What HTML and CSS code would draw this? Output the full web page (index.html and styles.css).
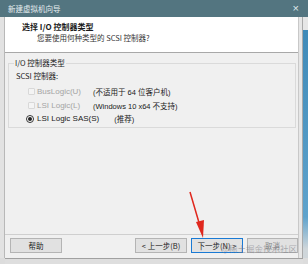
FILE: index.html
```html
<!DOCTYPE html>
<html>
<head>
<meta charset="utf-8">
<link rel="stylesheet" href="styles.css">
</head>
<body>
<div class="screen">
  <div class="titlebar">
    <span class="title">新建虚拟机向导</span>
    <span class="close">×</span>
  </div>
  <div class="frame">
    <div class="frame-left"></div>
    <div class="dialog">
      <div class="header">
        <div class="h-title">选择 I/O 控制器类型</div>
        <div class="h-sub">您要使用何种类型的 SCSI 控制器?</div>
      </div>
      <div class="body">
        <div class="group">
          <div class="group-label">I/O 控制器类型</div>
          <div class="scsi">SCSI 控制器:</div>
          <div class="opt">
            <span class="radio disabled"></span>
            <span class="opt-name disabled">BusLogic(U)</span>
            <span class="opt-note">(不适用于 64 位客户机)</span>
          </div>
          <div class="opt">
            <span class="radio disabled"></span>
            <span class="opt-name disabled">LSI Logic(L)</span>
            <span class="opt-note">(Windows 10 x64 不支持)</span>
          </div>
          <div class="opt">
            <span class="radio checked"></span>
            <span class="opt-name sas">LSI Logic SAS(S)</span>
            <span class="opt-note rec">(推荐)</span>
          </div>
        </div>
      </div>
      <div class="footer">
        <button class="btn help">帮助</button>
        <div class="spacer"></div>
        <button class="btn prev">&lt; 上一步(B)</button>
        <button class="btn next">下一步(N) &gt;</button>
        <button class="btn cancel">取消</button>
        <div class="watermark">@稀土掘金技术社区</div>
        <svg class="arrow" width="30" height="60" viewBox="0 0 30 60">
          <line x1="4" y1="2" x2="14" y2="36" stroke="#e0281e" stroke-width="1.5"/>
          <polygon points="10,32 18,30 17,48" fill="#e0281e"/>
        </svg>
      </div>
    </div>
    <div class="frame-right"></div>
    <div class="bgwin"></div>
  </div>
  <div class="frame-bottom"></div>
</div>
</body>
</html>
```
FILE: styles.css
```css
* { box-sizing: border-box; }
html, body { margin: 0; padding: 0; }
body {
  width: 308px;
  height: 264px;
  overflow: hidden;
  background: #dcdcdc;
  font-family: "Liberation Sans", "Noto Sans CJK SC", sans-serif;
  font-size: 8px;
  color: #1a1a1a;
}
.screen { width: 308px; height: 264px; display: flex; flex-direction: column; }
.titlebar {
  height: 17px;
  background: #537580;
  display: flex;
  align-items: center;
  justify-content: space-between;
  padding: 0 9px 0 8px;
  color: #e6eef0;
  flex: none;
}
.title { font-size: 7.5px; font-family: "Noto Sans CJK SC", sans-serif; }
.close { font-size: 11px; color: #dfe8ea; line-height: 1; }
.frame { display: flex; height: 241px; flex: none; }
.frame-left { width: 5px; background: #e2e2e2; border-right: 1px solid #b8b8b8; flex: none; }
.dialog { width: 293px; display: flex; flex-direction: column; background: #f0f0f0; flex: none; }
.frame-right { width: 5px; background: #e6e6e6; border-left: 1px solid #c8c8c8; border-right: 1px solid #a9a9a9; flex: none; }
.bgwin { flex: 1; background: linear-gradient(#e6e6e6 0, #e6e6e6 13px, #3f8ab8 13px, #5fa3cc 200px, #cfd6da 232px); }
.frame-bottom { flex: 1; background: #dedede; border-top: 1px solid #a0a0a0; margin-left: 5px; width: 298px; }
.header {
  height: 36px;
  background: #ffffff;
  border-bottom: 1px solid #a8a8a8;
  padding: 5px 0 0 17px;
  flex: none;
}
.h-title { font-weight: bold; font-size: 8px; line-height: 10px; font-family: "Noto Sans CJK SC", sans-serif; }
.h-sub { padding-left: 15px; line-height: 11px; font-size: 7.5px; color: #333; font-family: "Noto Sans CJK SC", sans-serif; }
.body { flex: 1; padding: 10px 2px 0 3px; }
.group {
  border: 1px solid #dadada;
  height: 65px;
  position: relative;
  padding: 7px 0 0 7px;
}
.group-label {
  position: absolute;
  top: -7px;
  left: 5px;
  background: #f0f0f0;
  padding: 0 1px;
  line-height: 11px;
  font-family: "Noto Sans CJK SC", sans-serif;
  font-size: 7.5px;
}
.scsi { line-height: 10px; font-size: 7.5px; font-family: "Noto Sans CJK SC", sans-serif; margin-bottom: 4px; }
.opt { display: flex; align-items: center; height: 13.5px; white-space: nowrap; }
.radio {
  width: 8px; height: 8px;
  border-radius: 50%;
  border: 1px solid #333;
  margin-left: 10px;
  margin-right: 3px;
  flex: none;
  position: relative;
  background: #fff;
}
.radio.disabled { border-color: #d8d8d8; border-radius: 1px; background: #f4f4f4; margin-left: 12px; margin-right: 2px; width: 7px; height: 7px; }
.radio.checked::after {
  content: "";
  position: absolute;
  left: 1px; top: 1px;
  width: 4px; height: 4px;
  border-radius: 50%;
  background: #222;
}
.opt-name { width: 56px; font-size: 8px; flex: none; }
.opt-name.sas { width: auto; }
.opt-name.disabled { color: #a4a4a4; }
.opt-note { font-size: 7.5px; font-family: "Liberation Sans", "Noto Sans CJK SC", sans-serif; }
.opt-note.rec { margin-left: 15px; }
.footer {
  height: 24px;
  border-top: 1px solid #cfcfcf;
  display: flex;
  align-items: center;
  padding: 0 0 2px 5px;
  position: relative;
  flex: none;
}
.spacer { flex: 1; }
.btn {
  height: 15px;
  width: 52px;
  background: #e1e1e1;
  border: 1px solid #b4b4b4;
  font-family: "Noto Sans CJK SC", sans-serif;
  font-size: 7.5px;
  padding: 0;
  color: #222;
  margin-right: 4px;
}
.btn.next { border-color: #1a7ad4; }
.btn.cancel { margin-right: 0; width: 51px; color: #888; }
.watermark {
  position: absolute;
  right: 1px;
  top: 7px;
  font-family: "Noto Sans CJK SC", sans-serif;
  font-size: 8.5px;
  color: rgba(120, 120, 130, 0.55);
}
.arrow { position: absolute; left: 181px; top: -45px; }
```
